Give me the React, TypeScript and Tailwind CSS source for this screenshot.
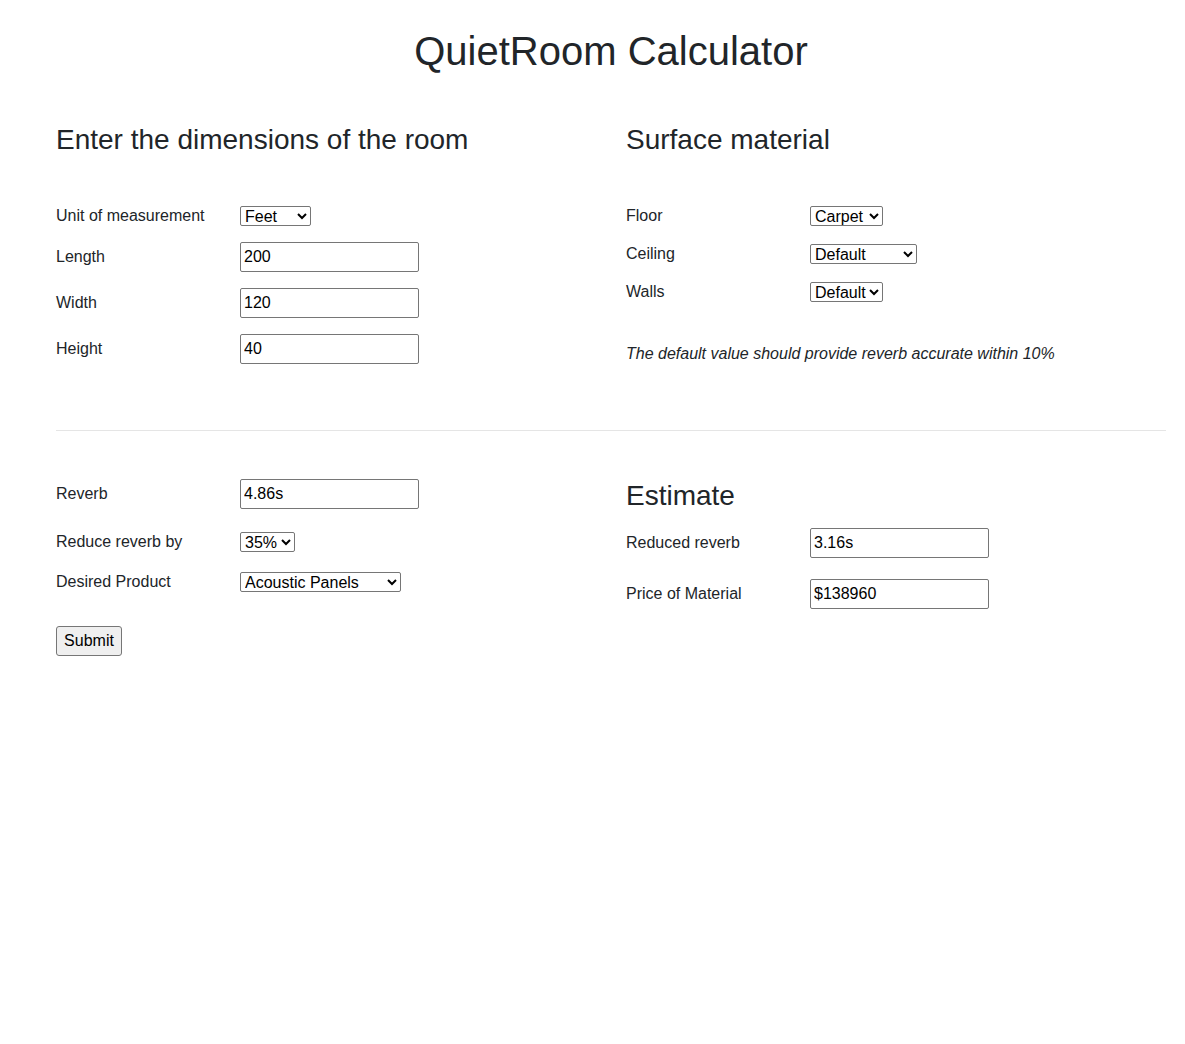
import { useState } from "react";

const font = "font-['Liberation_Sans',Arial,sans-serif]";

function Field({ value, onChange }: { value: string; onChange: (v: string) => void }) {
  return (
    <input
      value={value}
      onChange={(e) => onChange(e.target.value)}
      className="w-[179px] h-[30px] border border-[#767676] rounded-[2px] bg-white px-[3px] text-black text-[16px] outline-none"
    />
  );
}

function Pick({ value, options, w }: { value: string; options: string[]; w: string }) {
  return (
    <select
      defaultValue={value}
      className={`${w} h-[20px] border border-[#767676] rounded-[2px] bg-white text-black text-[16px] leading-[18px]`}
    >
      {options.map((o) => (
        <option key={o}>{o}</option>
      ))}
    </select>
  );
}

function Row({ label, children, h = "h-[30px]" }: { label: string; children: React.ReactNode; h?: string }) {
  return (
    <div className={`flex flex-row items-center ${h}`}>
      <label className="w-[184px] shrink-0 text-[16px] text-[#212529]">{label}</label>
      {children}
    </div>
  );
}

export default function App() {
  const [length, setLength] = useState("200");
  const [width, setWidth] = useState("120");
  const [height, setHeight] = useState("40");
  const [reverb, setReverb] = useState("4.86s");
  const [reduced, setReduced] = useState("3.16s");
  const [price, setPrice] = useState("$138960");

  return (
    <div className={`${font} bg-white min-h-[1044px] text-[#212529]`}>
      <div className="ml-[56px] w-[1110px] pt-[27px]">
        <h1 className="text-center text-[40px] leading-[48px]">QuietRoom Calculator</h1>

        {/* Room + surfaces */}
        <div className="grid grid-cols-2 gap-[30px] mt-[48px]">
          <div>
            <h2 className="text-[28px] leading-[34px]">Enter the dimensions of the room</h2>
            <div className="flex flex-col gap-4 mt-[49px]">
              <Row label="Unit of measurement" h="h-[20px]">
                <Pick value="Feet" options={["Feet", "Meters"]} w="w-[71px]" />
              </Row>
              <Row label="Length">
                <Field value={length} onChange={setLength} />
              </Row>
              <Row label="Width">
                <Field value={width} onChange={setWidth} />
              </Row>
              <Row label="Height">
                <Field value={height} onChange={setHeight} />
              </Row>
            </div>
          </div>

          <div>
            <h2 className="text-[28px] leading-[34px]">Surface material</h2>
            <div className="flex flex-col gap-[18px] mt-[49px]">
              <Row label="Floor" h="h-[20px]">
                <Pick value="Carpet" options={["Carpet", "Wood", "Concrete"]} w="w-[73px]" />
              </Row>
              <Row label="Ceiling" h="h-[20px]">
                <Pick value="Default" options={["Default", "Acoustic Tile", "Drywall"]} w="w-[107px]" />
              </Row>
              <Row label="Walls" h="h-[20px]">
                <Pick value="Default" options={["Default", "Drywall", "Brick"]} w="w-[73px]" />
              </Row>
            </div>
            <p className="italic text-[16px] leading-[24px] mt-[40px]">
              The default value should provide reverb accurate within 10%
            </p>
          </div>
        </div>

        <hr className="mt-[64px] border-t border-[#e5e5e5]" />

        {/* Reverb + estimate */}
        <div className="grid grid-cols-2 gap-[30px] mt-[48px]">
          <div className="flex flex-col">
            <Row label="Reverb">
              <Field value={reverb} onChange={setReverb} />
            </Row>
            <div className="mt-[23px]">
              <Row label="Reduce reverb by" h="h-[20px]">
                <Pick value="35%" options={["15%", "25%", "35%", "45%"]} w="w-[55px]" />
              </Row>
            </div>
            <div className="mt-[20px]">
              <Row label="Desired Product" h="h-[20px]">
                <Pick value="Acoustic Panels" options={["Acoustic Panels", "Ceiling Baffles", "Foam"]} w="w-[161px]" />
              </Row>
            </div>
            <div className="mt-[34px]">
              <button className="h-[30px] w-[66px] border border-[#767676] rounded-[3px] bg-[#efefef] text-black text-[16px]">
                Submit
              </button>
            </div>
          </div>

          <div className="flex flex-col">
            <h2 className="text-[28px] leading-[34px]">Estimate</h2>
            <div className="mt-[15px]">
              <Row label="Reduced reverb">
                <Field value={reduced} onChange={setReduced} />
              </Row>
            </div>
            <div className="mt-[21px]">
              <Row label="Price of Material">
                <Field value={price} onChange={setPrice} />
              </Row>
            </div>
          </div>
        </div>
      </div>
    </div>
  );
}
